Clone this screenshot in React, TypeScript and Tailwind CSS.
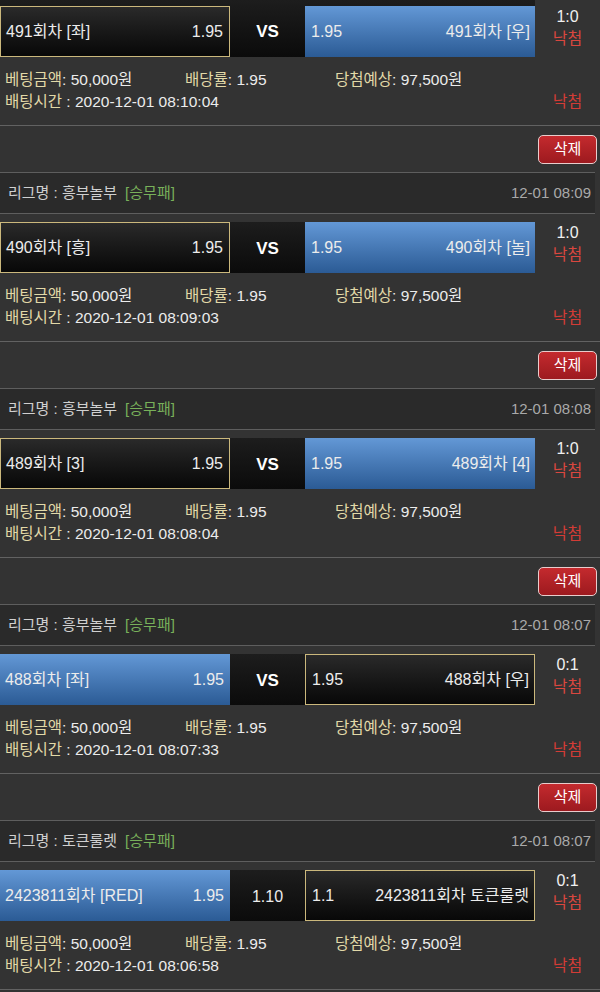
const font = { fontFamily: '"Liberation Sans", "Noto Sans CJK KR", sans-serif' };

type Side = { label: string; odds: string; blue: boolean };

type Bet = {
  league?: string;
  time?: string;
  left: Side;
  mid: string;
  right: Side;
  score: string;
  betAt: string;
};

const bets: Bet[] = [
  {
    left: { label: "491회차 [좌]", odds: "1.95", blue: false },
    mid: "VS",
    right: { label: "491회차 [우]", odds: "1.95", blue: true },
    score: "1:0",
    betAt: "2020-12-01 08:10:04",
  },
  {
    league: "흥부놀부",
    time: "12-01 08:09",
    left: { label: "490회차 [흥]", odds: "1.95", blue: false },
    mid: "VS",
    right: { label: "490회차 [놀]", odds: "1.95", blue: true },
    score: "1:0",
    betAt: "2020-12-01 08:09:03",
  },
  {
    league: "흥부놀부",
    time: "12-01 08:08",
    left: { label: "489회차 [3]", odds: "1.95", blue: false },
    mid: "VS",
    right: { label: "489회차 [4]", odds: "1.95", blue: true },
    score: "1:0",
    betAt: "2020-12-01 08:08:04",
  },
  {
    league: "흥부놀부",
    time: "12-01 08:07",
    left: { label: "488회차 [좌]", odds: "1.95", blue: true },
    mid: "VS",
    right: { label: "488회차 [우]", odds: "1.95", blue: false },
    score: "0:1",
    betAt: "2020-12-01 08:07:33",
  },
  {
    league: "토큰룰렛",
    time: "12-01 08:07",
    left: { label: "2423811회차 [RED]", odds: "1.95", blue: true },
    mid: "1.10",
    right: { label: "2423811회차 토큰룰렛", odds: "1.1", blue: false },
    score: "0:1",
    betAt: "2020-12-01 08:06:58",
  },
];

function Pick({ side, flip }: { side: Side; flip?: boolean }) {
  const look = side.blue
    ? "bg-linear-to-b from-[#6398d6] to-[#2b5b95]"
    : "border border-[#cbb87c] bg-linear-to-b from-[#2a2a2a] to-[#080808]";
  return (
    <div
      className={`flex h-[51px] w-[230px] items-center justify-between text-[16px] text-[#ececec] ${look} ${
        flip ? "pl-[6px] pr-[5px]" : "pl-[5px] pr-[6px]"
      }`}
    >
      {flip ? (
        <>
          <span>{side.odds}</span>
          <span>{side.label}</span>
        </>
      ) : (
        <>
          <span>{side.label}</span>
          <span>{side.odds}</span>
        </>
      )}
    </div>
  );
}

function MatchRow({ bet, first }: { bet: Bet; first?: boolean }) {
  return (
    <div className={`flex ${first ? "h-[57px]" : "h-[51px]"}`}>
      <div className="flex w-[535px] items-end bg-linear-to-b from-[#1d1d1d] to-[#0b0b0b]">
        <Pick side={bet.left} />
        <div className={`flex h-full w-[75px] items-center justify-center ${first ? "pt-[6px]" : "pt-[2px]"}`}>
          {bet.mid === "VS" ? (
            <span className="text-[17px] font-bold text-white">VS</span>
          ) : (
            <span className="text-[16px] text-[#ececec]">{bet.mid}</span>
          )}
        </div>
        <Pick side={bet.right} flip />
      </div>
      <div className={`flex w-[65px] flex-col items-center text-[16px] leading-[22px] ${first ? "pt-[6px]" : ""}`}>
        <span className="text-[#f0f0f0]">{bet.score}</span>
        <span className="text-[#d9473f]">낙첨</span>
      </div>
    </div>
  );
}

function Details({ bet }: { bet: Bet }) {
  return (
    <div className="h-[69px] border-b border-[#626262] pt-[12px] text-[15.5px] leading-[22px]">
      <div className="flex pl-[5px]">
        <span className="w-[180px]">
          <span className="text-[#e2d9a8]">베팅금액</span>
          <span className="text-[#ececec]">: 50,000원</span>
        </span>
        <span className="w-[150px]">
          <span className="text-[#e2d9a8]">배당률</span>
          <span className="text-[#ececec]">: 1.95</span>
        </span>
        <span>
          <span className="text-[#e2d9a8]">당첨예상</span>
          <span className="text-[#ececec]">: 97,500원</span>
        </span>
      </div>
      <div className="flex">
        <span className="flex-1 pl-[5px]">
          <span className="text-[#e2d9a8]">배팅시간</span>
          <span className="text-[#ececec]"> : {bet.betAt}</span>
        </span>
        <span className="w-[65px] text-center text-[16px] text-[#d23c36]">낙첨</span>
      </div>
    </div>
  );
}

function Block({ bet, first }: { bet: Bet; first?: boolean }) {
  return (
    <div>
      {!first && (
        <>
          <div className="flex h-[46px] items-center justify-end pr-[3px]">
            <button className="h-[29px] w-[59px] rounded-[5px] border border-[#e9cccc] bg-linear-to-b from-[#c42a2e] to-[#9d1a1f] text-[15px] text-white">
              삭제
            </button>
          </div>
          <div className="flex h-[42px] w-[595px] items-center justify-between border-y border-[#5e5e5e] bg-[#2a2a2a] pl-[8px] pr-[4px] text-[15px]">
            <span className="text-[#d0d0d0]">
              리그명 : {bet.league}
              <span className="ml-[8px] text-[#78b05a]">[승무패]</span>
            </span>
            <span className="text-[#a9a9a9]">{bet.time}</span>
          </div>
          <div className="h-[8px]" />
        </>
      )}
      <MatchRow bet={bet} first={first} />
      <Details bet={bet} />
    </div>
  );
}

export default function App() {
  return (
    <div className="h-[992px] w-[600px] overflow-hidden bg-[#333333]" style={font}>
      {bets.map((b, i) => (
        <Block key={i} bet={b} first={i === 0} />
      ))}
    </div>
  );
}
